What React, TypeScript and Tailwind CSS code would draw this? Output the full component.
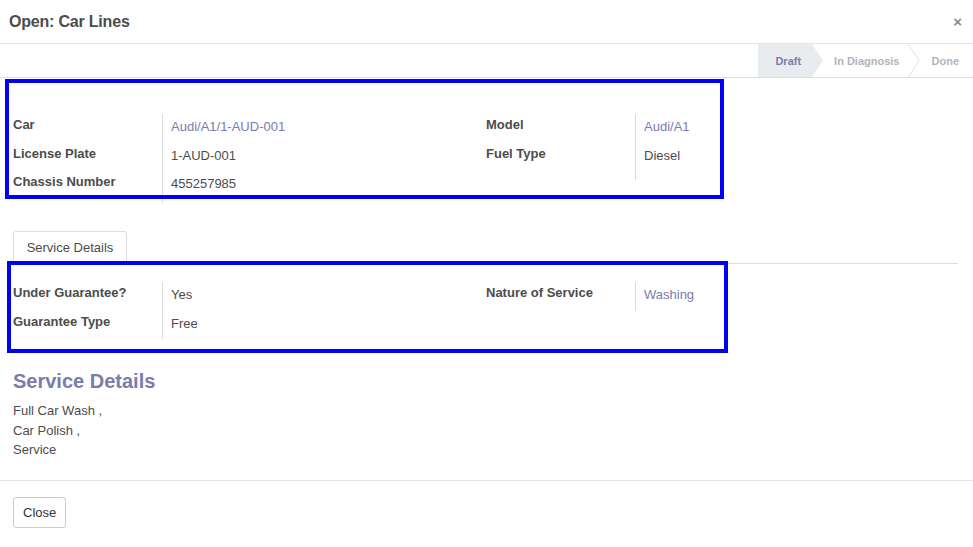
import React from "react";

const link = "text-[#7c7bad]";

function Row({ label, value, isLink, last }: { label: string; value: string; isLink?: boolean; last?: boolean }) {
  return (
    <div className={`flex ${last ? "h-[32px]" : "h-[28.5px]"}`}>
      <div className="w-[149px] shrink-0 pt-[2px] font-bold text-[#4c4c4c]">{label}</div>
      <div className={`border-l border-[#d9d9d9] pl-[8px] pt-[4px] flex-1 ${isLink ? link : "text-[#4c4c4c]"}`}>
        {value}
      </div>
    </div>
  );
}

export default function App() {
  return (
    <div className="relative w-full h-[547px] bg-white text-[13px] leading-[18px] font-['Liberation_Sans',Arial,sans-serif] text-[#4c4c4c] overflow-hidden">
      {/* header */}
      <div className="h-[44px] flex items-center justify-between pl-[9px] pr-[11px] border-b border-[#e5e5e5]">
        <h4 className="text-[16px] font-bold text-[#4c4c4c] tracking-[-0.2px]">Open: Car Lines</h4>
        <span className="text-[15px] font-bold text-[#8a8a8a] leading-none">×</span>
      </div>

      {/* statusbar */}
      <div className="h-[34px] flex justify-end border-b border-[#dedede] text-[11px]">
        <div className="flex items-center h-full">
          <div className="relative h-full flex items-center bg-[#e9ecef] pl-[17px] pr-[11px] font-bold text-[#7c7bad]">
            Draft
          </div>
          <svg width="11" height="33" viewBox="0 0 11 33" className="block">
            <polygon points="0,0 11,16.5 0,33" fill="#e9ecef" />
          </svg>
          <div className="pl-[11px] pr-[8px] text-[#adb5bd] font-bold">In Diagnosis</div>
          <svg width="12" height="33" viewBox="0 0 12 33" className="block">
            <polyline points="0.5,0 11,16.5 0.5,33" fill="none" stroke="#dee2e6" strokeWidth="1" />
          </svg>
          <div className="pl-[12px] pr-[14px] text-[#adb5bd] font-bold">Done</div>
        </div>
      </div>

      {/* sheet */}
      <div className="px-[13px]">
        {/* first group */}
        <div className="flex pt-[36px]">
          <div className="w-[473px]">
            <Row label="Car" value="Audi/A1/1-AUD-001" isLink />
            <Row label="License Plate" value="1-AUD-001" />
            <Row label="Chassis Number" value="455257985" last />
          </div>
          <div className="w-[236px]">
            <Row label="Model" value="Audi/A1" isLink />
            <Row label="Fuel Type" value="Diesel" />
            <div className="flex h-[9px]">
              <div className="w-[149px]" />
              <div className="border-l border-[#d9d9d9]" />
            </div>
          </div>
        </div>

        {/* notebook */}
        <div className="mt-[28px] mr-[2px] flex border-b border-[#dddddd] h-[33px]">
          <div className="w-[114px] h-[33px] -mb-px flex items-center justify-center border border-b-0 border-[#dddddd] rounded-t-[3px] bg-white text-[#4c4c4c]">
            Service Details
          </div>
        </div>

        {/* second group */}
        <div className="flex pt-[18px]">
          <div className="w-[473px]">
            <Row label="Under Guarantee?" value="Yes" />
            <Row label="Guarantee Type" value="Free" />
          </div>
          <div className="w-[236px]">
            <Row label="Nature of Service" value="Washing" isLink />
          </div>
        </div>

        {/* service details */}
        <h3 className="mt-[30px] text-[20px] leading-[24px] font-bold text-[#7c7bad]">Service Details</h3>
        <div className="mt-[8px] leading-[19.5px]">
          <div>Full Car Wash ,</div>
          <div>Car Polish ,</div>
          <div>Service</div>
        </div>
      </div>

      {/* footer */}
      <div className="absolute left-0 right-0 top-[480px] border-t border-[#e5e5e5] px-[13px] pt-[16px]">
        <button className="h-[31px] px-[9px] border border-[#cccccc] rounded-[3px] bg-white text-[#333] text-[13px]">
          Close
        </button>
      </div>

      {/* annotation boxes drawn over the screenshot */}
      <div className="absolute left-[5px] top-[79px] w-[719px] h-[120px] border-[4px] border-[#0000f2] pointer-events-none" />
      <div className="absolute left-[7px] top-[261px] w-[721px] h-[92px] border-[4px] border-[#0000f2] pointer-events-none" />
    </div>
  );
}
